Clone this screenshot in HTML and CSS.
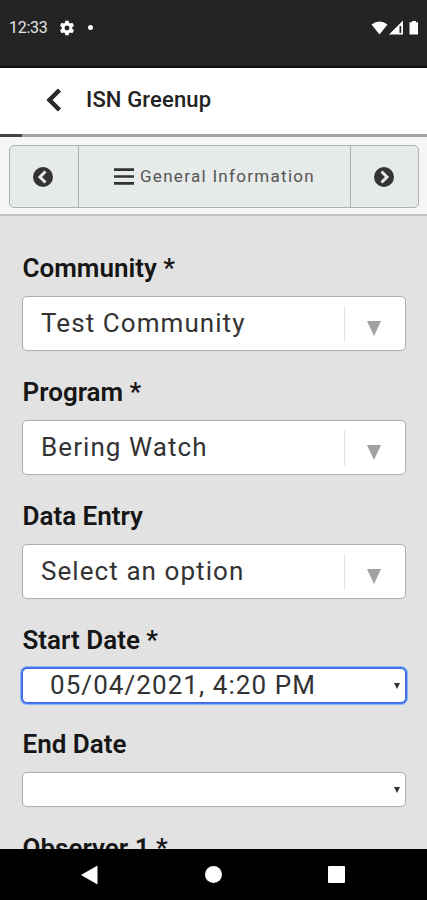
FILE: index.html
```html
<!DOCTYPE html>
<html lang="en">
<head>
<meta charset="utf-8">
<title>ISN Greenup</title>
<link rel="stylesheet" href="styles.css">
</head>
<body>
<div class="status">
  <span class="clock">12:33</span>
  <svg class="gear" width="16" height="16" viewBox="0 0 24 24"><path fill="#fff" fill-rule="evenodd" d="M9.6 1h4.8l.6 3.2 2 1.2 3.100-1.100 2.400 4.200-2.500 2.100v2.800l2.500 2.100-2.400 4.200-3.100-1.100-2 1.200-.6 3.200H9.600L9 19.800l-2-1.200-3.100 1.100-2.400-4.200L4 13.400v-2.800L1.500 8.500l2.400-4.200L7 5.400l2-1.200zM12 8.300a3.700 3.700 0 1 0 0 7.400 3.700 3.700 0 0 0 0-7.400z"/></svg>
  <span class="dot"></span>
  <svg class="signals" width="50" height="16" viewBox="0 0 50 16"><g fill="#fff"><path d="M0.500 4.500Q8.500-1.500 16.500 4.500L8.500 14.500z"/><path fill-rule="evenodd" d="M18 14.500L32 .5v14zM28.500 6v7h1.700V6z"/><path d="M41 1h4v1.200h2v12.300h-8.500V2.200H41z"/></g></svg>
</div>
<header class="header">
  <svg width="16" height="24" viewBox="0 0 16 24"><path d="M13.500 2L3.500 12l10 10" fill="none" stroke="#292929" stroke-width="4.500"/></svg>
  <h1>ISN Greenup</h1>
</header>
<div class="progress"><div class="progress-done"></div></div>
<nav class="toolbar">
  <div class="group">
    <div class="step"><svg width="20" height="20" viewBox="0 0 20 20"><circle cx="10" cy="10" r="10" fill="#333"/><path d="M12.500 4.500L7 10l5.500 5.500" fill="none" stroke="#e6eae9" stroke-width="3"/></svg></div>
    <div class="section"><svg width="20" height="17" viewBox="0 0 20 17"><path d="M0 1.700h20M0 8.500h20M0 15.300h20" stroke="#333" stroke-width="2.700"/></svg><span>General Information</span></div>
    <div class="step last"><svg width="20" height="20" viewBox="0 0 20 20"><circle cx="10" cy="10" r="10" fill="#333"/><path d="M7.500 4.500L13 10l-5.500 5.500" fill="none" stroke="#e6eae9" stroke-width="3"/></svg></div>
  </div>
</nav>
<main class="form">
  <div class="label">Community *</div>
  <div class="select"><span>Test Community</span><i class="rule"></i><i class="arrow"></i></div>
  <div class="label">Program *</div>
  <div class="select"><span>Bering Watch</span><i class="rule"></i><i class="arrow"></i></div>
  <div class="label">Data Entry</div>
  <div class="select"><span>Select an option</span><i class="rule"></i><i class="arrow"></i></div>
  <div class="label">Start Date *</div>
  <div class="date focused"><span>05/04/2021, 4:20 PM</span><i class="caret"></i></div>
  <div class="label">End Date</div>
  <div class="date"><span></span><i class="caret"></i></div>
  <div class="label">Observer 1 *</div>
</main>
<footer class="android">
  <svg width="17" height="20" viewBox="0 0 17 20"><path d="M0 10L16.500.5v19z" fill="#fff"/></svg>
  <span class="home"></span>
  <span class="recent"></span>
</footer>
</body>
</html>
```
FILE: styles.css
```css
* { box-sizing: border-box; }
body {
  margin: 0;
  width: 427px;
  height: 900px;
  overflow: hidden;
  display: flex;
  flex-direction: column;
  background: #e2e2e2;
  font-family: Roboto, "Liberation Sans", sans-serif;
  color: #161616;
}
.status {
  flex: none;
  height: 68px;
  padding: 0 6px 11px 9px;
  display: flex;
  align-items: center;
  background: #242424;
  border-bottom: 2px solid #0c0c0c;
}
.clock { width: 50px; font-size: 16px; letter-spacing: -0.3px; color: #e4e4e4; }
.dot { width: 5px; height: 5px; margin-left: 13px; border-radius: 50%; background: #fff; }
.signals { margin-left: auto; }
.header {
  flex: none;
  height: 66px;
  padding: 0 0 3px 46px;
  display: flex;
  align-items: center;
  gap: 24px;
  background: #fff;
}
.header h1 { margin: 0; font-size: 22px; font-weight: 500; letter-spacing: 0.15px; line-height: 30px; color: #222; }
.progress { flex: none; height: 3px; background: #a3a3a3; }
.progress-done { width: 22px; height: 3px; background: #444; }
.toolbar {
  flex: none;
  height: 79px;
  padding: 8px 8px 8px 9px;
  background: #f5f7f6;
  border-bottom: 2px solid #c2c4c3;
}
.group {
  height: 63px;
  display: flex;
  background: #e6eae9;
  border: 1px solid #adb0af;
  border-radius: 5px;
}
.step { width: 69px; padding-right: 2px; display: flex; align-items: center; justify-content: center; border-right: 1px solid #adb0af; }
.step.last { width: 68px; border-right: 0; border-left: 1px solid #adb0af; }
.section { flex: 1; display: flex; align-items: center; justify-content: center; gap: 6px; font-size: 17px; letter-spacing: 1.3px; color: #555; }
.section span { padding-bottom: 2px; }
.form { flex: 1; min-height: 0; overflow: hidden; padding: 37px 21px 0 22px; }
.label { height: 31px; margin-bottom: 12px; padding-left: 0.500px; font-size: 26px; line-height: 30px; font-weight: 600; white-space: nowrap; }
.select, .date {
  display: flex;
  align-items: center;
  margin-bottom: 26px;
  background: #fff;
  border: 1px solid #acafae;
  border-radius: 5px;
  color: #333;
  font-size: 26px;
  letter-spacing: 1.07px;
  white-space: nowrap;
}
.select { height: 55px; padding: 0 24px 0 18px; }
.select span, .date span { flex: 1; }
.select span { padding-bottom: 1px; }
.rule { width: 1px; height: 36px; background: #e4e4e4; }
.arrow { margin: 10px 0 0 22px; border: 7.500px solid transparent; border-top: 15px solid #a1a1a1; border-bottom: 0; }
.date { height: 35px; padding: 0 5px 0 27px; }
.date span { padding-bottom: 1px; }
.caret { border: 3px solid transparent; border-top: 6px solid #333; border-bottom: 0; }
.focused { border-color: #3c68e8; box-shadow: 0 0 0 1px #4978ec, 0 0 0 2px #86b4f2; }
.android {
  flex: none;
  height: 51px;
  padding: 0 82px 0 81px;
  display: flex;
  align-items: center;
  justify-content: space-between;
  background: #000;
}
.home { width: 17px; height: 17px; border-radius: 50%; background: #fff; }
.recent { width: 17px; height: 17px; border-radius: 1px; background: #fff; }
```
